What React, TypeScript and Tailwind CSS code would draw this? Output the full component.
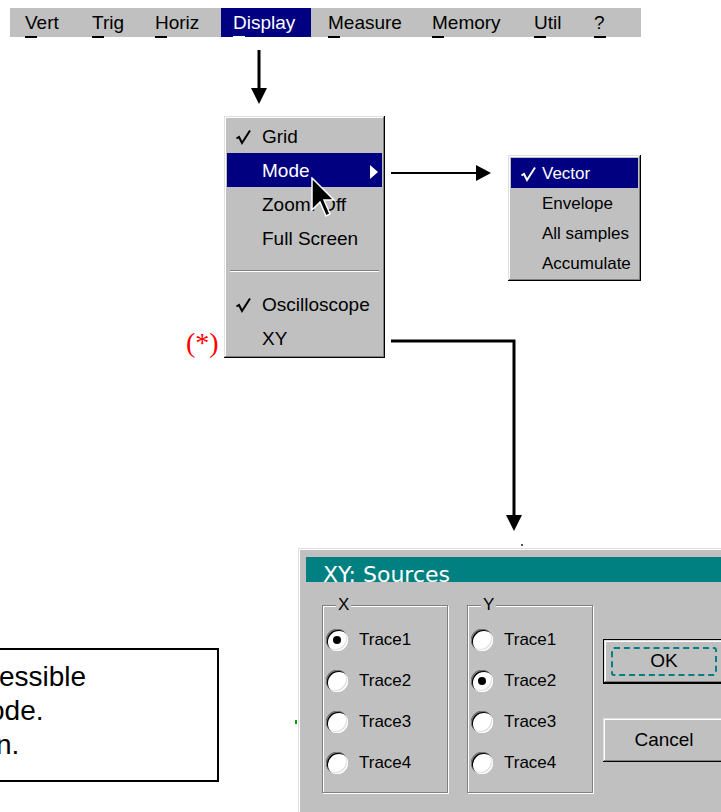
import React from 'react';

const bevelOut =
  'shadow-[inset_-1px_-1px_0_#000,inset_1px_1px_0_#dfdfdf,inset_-2px_-2px_0_#808080,inset_2px_2px_0_#fff]';

type BarItem = { label: string; w: string; pl: string; active?: boolean };

const barItems: BarItem[] = [
  { label: 'Vert', w: 'w-[67px]', pl: 'pl-[12px]' },
  { label: 'Trig', w: 'w-[63px]', pl: 'pl-[12px]' },
  { label: 'Horiz', w: 'w-[78px]', pl: 'pl-[12px]' },
  { label: 'Display', w: 'w-[90px]', pl: 'pl-[12px]', active: true },
  { label: 'Measure', w: 'w-[109px]', pl: 'pl-[17px]' },
  { label: 'Memory', w: 'w-[102px]', pl: 'pl-[12px]' },
  { label: 'Util', w: 'w-[60px]', pl: 'pl-[12px]' },
  { label: '?', w: 'w-[59px]', pl: 'pl-[12px]' },
];

function MenuBar() {
  return (
    <div className="absolute left-[10px] top-[8px] flex text-[19px]">
      <div className="h-[29px] w-[3px] bg-[#c0c0c0]" />
      {barItems.map((it) => (
        <div key={it.label} className={`flex flex-col ${it.w}`}>
          <div
            className={`flex h-[29px] items-center pt-[2px] ${it.pl} ${
              it.active ? 'bg-[#000080] text-white' : 'bg-[#c0c0c0] text-black'
            }`}
          >
            {it.label}
          </div>
          <div className={`-mt-[1px] h-[2px] ${it.pl}`}>
            <div className={`h-[2px] w-[12px] ${it.active ? 'bg-white' : 'bg-black'}`} />
          </div>
        </div>
      ))}
    </div>
  );
}

function Check({ white }: { white?: boolean }) {
  return (
    <svg width="17" height="17" viewBox="0 0 17 17">
      <path
        d="M1.5 9.5 L4 8 L7 14 L15 1.5"
        fill="none"
        stroke={white ? '#fff' : '#000'}
        strokeWidth="2"
        strokeLinejoin="miter"
      />
    </svg>
  );
}

function MenuRow({
  label,
  check,
  active,
  arrow,
}: {
  label: string;
  check?: boolean;
  active?: boolean;
  arrow?: boolean;
}) {
  return (
    <div
      className={`flex h-[34px] items-center pr-[4px] pt-[3px] ${
        active ? 'bg-[#000080] text-white' : 'text-black'
      }`}
    >
      <div className="w-[35px] pl-[8px]">{check && <Check white={active} />}</div>
      <span className="flex-1">{label}</span>
      {arrow && (
        <svg width="8" height="14" viewBox="0 0 8 14">
          <path d="M0 0 L8 7 L0 14 Z" fill="#fff" />
        </svg>
      )}
    </div>
  );
}

function DisplayMenu() {
  return (
    <div className={`absolute left-[224px] top-[116px] w-[161px] bg-[#c0c0c0] p-[3px] text-[19px] ${bevelOut}`}>
      <MenuRow label="Grid" check />
      <MenuRow label="Mode" active arrow />
      <MenuRow label="Zoom: Off" />
      <MenuRow label="Full Screen" />
      <div className="flex h-[32px] items-center px-[3px]">
        <div className="h-[2px] w-full border-t border-b border-t-[#808080] border-b-white" />
      </div>
      <MenuRow label="Oscilloscope" check />
      <MenuRow label="XY" />
    </div>
  );
}

function ModeMenu() {
  const rows = ['Vector', 'Envelope', 'All samples', 'Accumulate'];
  return (
    <div className={`absolute left-[508px] top-[155px] w-[133px] bg-[#c0c0c0] p-[3px] text-[17px] ${bevelOut}`}>
      {rows.map((r, i) => (
        <div
          key={r}
          className={`flex h-[30px] items-center pt-[2px] ${
            i === 0 ? 'bg-[#000080] text-white' : 'text-black'
          }`}
        >
          <div className="w-[31px] pl-[9px]">{i === 0 && <Check white />}</div>
          <span>{r}</span>
        </div>
      ))}
    </div>
  );
}

function Radio({ label, on }: { label: string; on?: boolean }) {
  return (
    <div className="flex h-[41px] items-center pl-[3px]">
      <div className="flex h-[22px] w-[22px] items-center justify-center rounded-full bg-white shadow-[inset_1px_1px_0_#808080,inset_2px_2px_0_#000,inset_-1px_-1px_0_#fff,inset_-2px_-2px_0_#dfdfdf]">
        {on && <div className="h-[8px] w-[8px] rounded-full bg-black" />}
      </div>
      <span className="ml-[11px] text-[17px]">{label}</span>
    </div>
  );
}

function Group({ title, selected }: { title: string; selected: number }) {
  return (
    <div className="relative h-[188px] w-[126px] border border-[#808080] pt-[13px] shadow-[inset_1px_1px_0_#fff,1px_1px_0_#fff]">
      <span className="absolute left-[13px] top-[-11px] bg-[#c0c0c0] px-[2px] text-[17px] leading-[20px]">
        {title}
      </span>
      {[1, 2, 3, 4].map((n) => (
        <Radio key={n} label={`Trace${n}`} on={n === selected} />
      ))}
    </div>
  );
}

function SourcesDialog() {
  return (
    <div className="absolute left-[298px] top-[548px] h-[290px] w-[440px] bg-[#c0c0c0] pl-[8px] pt-[9px] shadow-[inset_1px_1px_0_#dfdfdf,inset_2px_2px_0_#fff]">
      <div className="h-[25px] overflow-hidden bg-[#008080] pl-[17px] pt-[7px] font-['DejaVu_Sans',sans-serif] text-[22px] leading-[22px] text-white">
        XY: Sources
      </div>
      <div className="flex items-start pl-[16px] pt-[23px]">
        <Group title="X" selected={1} />
        <div className="ml-[19px]">
          <Group title="Y" selected={2} />
        </div>
        <div className="ml-[10px] flex flex-col pt-[34px]">
          <div className={`flex h-[45px] w-[122px] items-center justify-center border border-black ${bevelOut}`}>
            <div className="flex h-[29px] w-[106px] items-center justify-center rounded-[3px] border-2 border-dashed border-[#008080] text-[19px]">
              OK
            </div>
          </div>
          <div className={`mt-[34px] flex h-[44px] w-[122px] items-center justify-center text-[19px] ${bevelOut}`}>
            Cancel
          </div>
        </div>
      </div>
    </div>
  );
}

function Arrows() {
  return (
    <svg className="pointer-events-none absolute left-0 top-0" width="721" height="812">
      <line x1="259" y1="50" x2="259" y2="90" stroke="#000" strokeWidth="3" />
      <polygon points="251,88 267,88 259,104" fill="#000" />
      <line x1="391" y1="173" x2="478" y2="173" stroke="#000" strokeWidth="2" />
      <polygon points="476,165 476,181 491,173" fill="#000" />
      <polyline points="391,341 514,341 514,517" fill="none" stroke="#000" strokeWidth="3" />
      <polygon points="506,515 522,515 514,531" fill="#000" />
    </svg>
  );
}

function Cursor() {
  return (
    <svg className="absolute left-[311px] top-[177px]" width="25" height="42" viewBox="0 0 25 42">
      <polygon
        points="1,1 1,33 9,25 15,39 19,37 13,23 23,23"
        fill="#000"
        stroke="#fff"
        strokeWidth="1.5"
        strokeLinejoin="miter"
      />
    </svg>
  );
}

export default function App() {
  return (
    <div className="relative h-[812px] w-[721px] overflow-hidden bg-white font-['Liberation_Sans',Arial,sans-serif] text-black">
      <MenuBar />
      <Arrows />
      <DisplayMenu />
      <Cursor />
      <ModeMenu />

      {/* footnote marker */}
      <span className="absolute left-[186px] top-[329px] font-['Liberation_Serif',serif] text-[28px] leading-none text-[#ff0000]">
        (*)
      </span>

      {/* note box, runs off the left edge */}
      <div className="absolute left-[-10px] top-[648px] h-[134px] w-[229px] border-2 border-black pt-[10px] text-[28px] leading-[34px]">
        <div className="ml-[7px]">essible</div>
        <div className="-ml-[3px]">ode.</div>
        <div className="ml-[4px]">n.</div>
      </div>

      <SourcesDialog />
      <div className="absolute left-[295px] top-[720px] h-[4px] w-[2px] bg-[#00a000]" />
      <div className="absolute left-[521px] top-[544px] h-[2px] w-[2px] bg-[#555]" />
    </div>
  );
}
